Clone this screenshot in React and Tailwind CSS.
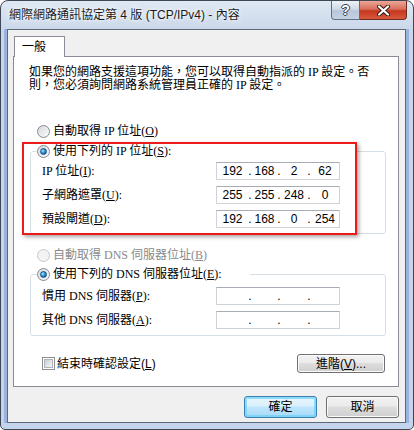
const SANS = "font-['Liberation_Sans','Noto_Sans_CJK_TC',sans-serif]"
const MING = "font-['Liberation_Serif','Noto_Sans_CJK_TC',serif]"

function Radio({ checked, disabled }) {
  return (
    <span className={`flex h-[13px] w-[13px] shrink-0 items-center justify-center rounded-full border ${disabled ? 'border-[#c6c8cc] bg-[#f3f3f3]' : 'border-[#868b93] bg-[linear-gradient(135deg,#d5d9df,#fbfbfb)]'}`}>
      {checked && (
        <span className="h-[7px] w-[7px] rounded-full border border-[#1b4f80] bg-[radial-gradient(circle_at_35%_35%,#a6e8ff,#2f96d8_45%,#0b3e72)]" />
      )}
    </span>
  )
}

function IpField({ parts = ['', '', '', ''] }) {
  return (
    <div className={`flex h-[18px] w-[124px] items-center border border-[#cfd3d9] border-t-[#a8acb4] bg-white text-[12px] leading-none text-black ${SANS}`}>
      <span className="w-[31px] text-center">{parts[0]}</span>
      <span className="w-[4px] text-center">.</span>
      <span className="w-[25px] text-center">{parts[1]}</span>
      <span className="w-[4px] text-center">.</span>
      <span className="w-[26px] text-center">{parts[2]}</span>
      <span className="w-[4px] text-center">.</span>
      <span className="w-[28px] text-center">{parts[3]}</span>
    </div>
  )
}

function Row({ label, parts }) {
  return (
    <div className="flex h-[18px] items-center">
      <span className="w-[179px] pl-[5px] leading-none">{label}</span>
      <IpField parts={parts} />
    </div>
  )
}

function Button({ children, primary, className = '' }) {
  return (
    <button
      className={`flex items-center justify-center rounded-[3px] border text-[12px] leading-none text-black ${SANS} ${
        primary
          ? 'border-[#3c7fb1] bg-[linear-gradient(#eaf6fd,#d9f0fc_45%,#bee6fd_50%,#a7d9f5)] shadow-[inset_0_0_0_2px_rgba(110,210,248,0.75)]'
          : 'border-[#707070] bg-[linear-gradient(#f2f2f2,#ebebeb_45%,#dddddd_50%,#cfcfcf)] shadow-[inset_0_0_0_1px_#fbfbfb]'
      } ${className}`}
    >
      {children}
    </button>
  )
}

export default function App() {
  return (
    <div className="relative h-[430px] w-[414px] overflow-hidden rounded-t-[8px] rounded-b-[5px] border border-[#3e4756] bg-[linear-gradient(#dfe8f3,#c9d7ea_30px,#c4d4ec)]">
      {/* Title bar */}
      <div className="flex h-[28px] items-start justify-between pr-[6px]">
        <div className={`pl-[8px] pt-[7px] text-[12px] leading-[14px] text-[#1b1b1b] [text-shadow:0_0_6px_#fff,0_0_3px_#fff] ${SANS}`}>
          網際網路通訊協定第 4 版 (TCP/IPv4) - 內容
        </div>
        <div className="flex">
          <div className="flex h-[19px] w-[29px] items-center justify-center rounded-bl-[4px] border border-t-0 border-[#5f6f86] bg-[linear-gradient(#eef2f8,#cfd9e6_45%,#b8c6da_55%,#c4d2e4)]">
            <span className={`text-[14px] font-bold leading-none text-white [text-shadow:0_0_1px_#2c3440,1px_0_0_#3c4554,-1px_0_0_#3c4554,0_1px_0_#3c4554,0_-1px_0_#3c4554] ${SANS}`}>?</span>
          </div>
          <div className="flex h-[19px] w-[47px] items-center justify-center rounded-br-[4px] border border-l-0 border-t-0 border-[#6e2a20] bg-[linear-gradient(#eaa797,#d8705b_45%,#c5361f_55%,#d65a3c)]">
            <svg width="13" height="11" viewBox="0 0 13 11">
              <path d="M2 1.5 L11 9.5 M11 1.5 L2 9.5" stroke="#3a1b16" strokeWidth="4.2" strokeLinecap="round" />
              <path d="M2 1.5 L11 9.5 M11 1.5 L2 9.5" stroke="#ffffff" strokeWidth="2.2" strokeLinecap="round" />
            </svg>
          </div>
        </div>
      </div>

      {/* Client area */}
      <div className="ml-[6px] mr-[7px] h-[394px] border border-[#5d6878] bg-[#f0f0f0] shadow-[-3px_0_0_#9bb2df,3px_0_0_#9bb2df]">
        <div className="pl-[6px] pt-[6px]">
          <div className={`relative z-10 -mb-px h-[21px] w-[51px] border border-b-0 border-[#898c95] bg-white pl-[7px] pt-[3px] text-[12px] leading-[14px] text-black ${SANS}`}>
            一般
          </div>
        </div>
        <div className={`ml-[5px] h-[331px] w-[386px] border border-[#898c95] bg-white text-[12px] text-black ${MING}`}>
          <p className="ml-[15px] mt-[9px] whitespace-nowrap leading-[13px]">
            如果您的網路支援這項功能，您可以取得自動指派的 IP 設定。否
            <br />
            則，您必須詢問網路系統管理員正確的 IP 設定。
          </p>

          <div className="ml-[23px] mt-[31px] flex h-[16px] items-center gap-[3px]">
            <Radio />
            <span className="leading-none">自動取得 IP 位址(<u>O</u>)</span>
          </div>

          <fieldset className="ml-[16px] mt-[4px] w-[356px] rounded-[3px] border border-[#d5dfe5] px-[6px] pb-[5px]">
            <legend className="h-[16px] w-[319px]">
              <div className="flex h-[16px] items-center gap-[3px]">
                <Radio checked />
                <span className="leading-none">使用下列的 IP 位址(<u>S</u>):</span>
              </div>
            </legend>
            <div className="mt-[3px] flex flex-col gap-[6px]">
              <Row label={<>IP 位址(<u>I</u>):</>} parts={['192', '168', '2', '62']} />
              <Row label={<>子網路遮罩(<u>U</u>):</>} parts={['255', '255', '248', '0']} />
              <Row label={<>預設閘道(<u>D</u>):</>} parts={['192', '168', '0', '254']} />
            </div>
          </fieldset>

          <div className="ml-[23px] mt-[13px] flex h-[16px] items-center gap-[3px]">
            <Radio disabled />
            <span className="leading-none text-[#8a8a8a]">自動取得 DNS 伺服器位址(<u>B</u>)</span>
          </div>

          <fieldset className="ml-[16px] mt-[3px] w-[356px] rounded-[3px] border border-[#d5dfe5] px-[6px] pb-[6px]">
            <legend className="h-[16px] w-[213px]">
              <div className="flex h-[16px] items-center gap-[3px]">
                <Radio checked />
                <span className="leading-none">使用下列的 DNS 伺服器位址(<u>E</u>):</span>
              </div>
            </legend>
            <div className="mt-[5px] flex flex-col gap-[6px]">
              <Row label={<>慣用 DNS 伺服器(<u>P</u>):</>} />
              <Row label={<>其他 DNS 伺服器(<u>A</u>):</>} />
            </div>
          </fieldset>

          <div className="ml-[28px] mr-[13px] mt-[18px] flex h-[19px] items-center justify-between">
            <div className="flex items-center gap-[2px]">
              <span className="flex h-[13px] w-[13px] items-center justify-center border border-[#8e8f8f] bg-white">
                <span className="h-[9px] w-[9px] border border-[#b0b5bb] bg-[linear-gradient(135deg,#c9ced5,#f7f7f7)]" />
              </span>
              <span className={`leading-none ${SANS}`}>結束時確認設定(<u>L</u>)</span>
            </div>
            <Button className="h-[19px] w-[88px]">
              進階(<u>V</u>)...
            </Button>
          </div>
        </div>

        <div className="mr-[6px] mt-[9px] flex justify-end gap-[9px]">
          <Button primary className="h-[22px] w-[73px]">確定</Button>
          <Button className="h-[22px] w-[73px]">取消</Button>
        </div>
      </div>

      {/* red highlight annotation */}
      <div className="pointer-events-none absolute left-[21px] top-[141px] h-[93px] w-[335px] border-2 border-[#ee1a1a] shadow-[2px_2px_4px_rgba(0,0,0,0.35)]" />
    </div>
  )
}
